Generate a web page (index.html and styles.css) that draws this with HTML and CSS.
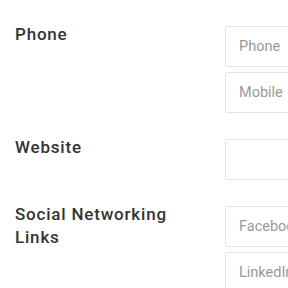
FILE: index.html
```html
<!DOCTYPE html>
<html lang="en">
<head>
    <meta charset="UTF-8">
    <meta name="viewport" content="width=device-width, initial-scale=1.0">
    <title>Contact Details</title>
    <link rel="stylesheet" href="styles.css">
</head>
<body>

    <form class="profile-form">
        <!-- Address (scrolled out of view) -->
        <div class="form-row">
            <label class="form-label"></label>
            <div class="form-fields">
                <input class="form-input" type="text" placeholder="Zip">
            </div>
        </div>

        <!-- Phone -->
        <div class="form-row">
            <label class="form-label">Phone</label>
            <div class="form-fields">
                <input class="form-input" type="tel" placeholder="Phone">
                <input class="form-input" type="tel" placeholder="Mobile">
            </div>
        </div>

        <!-- Website -->
        <div class="form-row">
            <label class="form-label">Website</label>
            <div class="form-fields">
                <input class="form-input" type="url">
            </div>
        </div>

        <!-- Social Links -->
        <div class="form-row">
            <label class="form-label">Social Networking Links</label>
            <div class="form-fields">
                <input class="form-input" type="url" placeholder="Facebook">
                <input class="form-input" type="url" placeholder="LinkedIn">
            </div>
        </div>
    </form>

</body>
</html>
```

FILE: styles.css
```css
body {
    margin: 0;
    background: #fff;
    font-family: Roboto, "Liberation Sans", sans-serif;
    overflow: hidden;
}

.profile-form {
    margin-top: -46px;
    padding-left: 15px;
}

/* One label + its inputs */
.form-row {
    display: grid;
    grid-template-columns: 210px 260px;
    align-items: start;
    margin-bottom: 21px;
}

.form-label {
    max-width: 180px;
    padding-top: 2px;
    font-size: 17px;
    line-height: 23px;
    font-weight: 500;
    letter-spacing: 0.8px;
    color: #333;
}

.form-fields {
    display: flex;
    flex-direction: column;
    gap: 5px;
    padding-top: 5px;
}

.form-input {
    box-sizing: border-box;
    height: 41px;
    padding: 0 13px;
    border: 1px solid #e3e3e3;
    border-radius: 2px;
    font-family: Roboto, "Liberation Sans", sans-serif;
    font-size: 14.5px;
    color: #333;
    outline: none;
}

.form-input::placeholder {
    color: #999;
}
```
